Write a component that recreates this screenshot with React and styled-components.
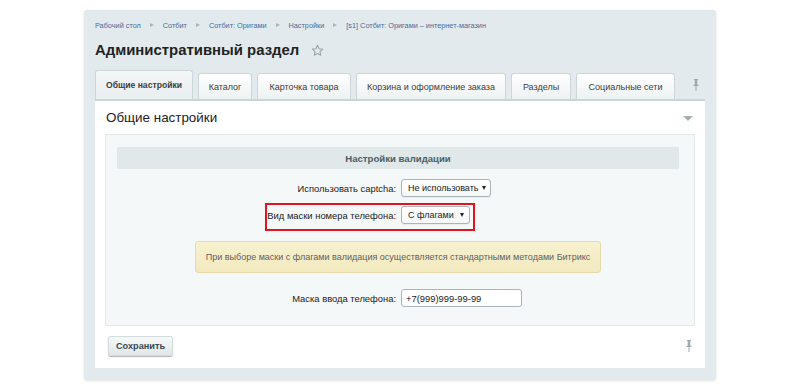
import React from "react";
import styled, { createGlobalStyle } from "styled-components";

const Global = createGlobalStyle`
  html, body { margin: 0; padding: 0; background: #fff; }
  body { font-family: "Liberation Sans", Arial, sans-serif; color: #333; }
`;

const Page = styled.div`
  padding-top: 10px;
  width: 800px;
  height: 389px;
  box-sizing: border-box;
`;

const Panel = styled.div`
  width: 632px;
  margin: 0 auto;
  box-sizing: border-box;
  background: #e2eaed;
  border-radius: 3px;
  box-shadow: 0 1px 3px rgba(0, 0, 0, 0.12);
  padding: 9px 11px 12px;
`;

const Crumbs = styled.div`
  display: flex;
  align-items: center;
  height: 12px;
  font-size: 7.3px;
  color: #4a6a9a;
  white-space: nowrap;
`;

const Sep = styled.span`
  width: 0;
  height: 0;
  margin: 0 9px;
  border-left: 4px solid #a9b4b9;
  border-top: 2.5px solid transparent;
  border-bottom: 2.5px solid transparent;
`;

const TitleRow = styled.div`
  display: flex;
  align-items: center;
  margin-top: 7px;
  height: 24px;
`;

const Title = styled.h1`
  margin: 0;
  font-size: 14.9px;
  font-weight: bold;
  color: #222;
  white-space: nowrap;
`;

const Star = styled.svg`
  margin-left: 12px;
  margin-top: 1px;
`;

const TabsRow = styled.div`
  display: flex;
  align-items: flex-end;
  gap: 5px;
  margin-top: 8px;
  height: 29px;
`;

const Tab = styled.div`
  box-sizing: border-box;
  flex: none;
  width: ${(p) => p.$w}px;
  height: ${(p) => (p.$active ? "29px" : "26px")};
  display: flex;
  align-items: center;
  justify-content: center;
  white-space: nowrap;
  font-size: ${(p) => (p.$active ? "8.6px" : "9px")};
  font-weight: ${(p) => (p.$active ? "bold" : "normal")};
  color: #3d3d3d;
  border: 1px solid #cdd6d9;
  border-bottom: none;
  border-radius: 3px 3px 0 0;
  background: ${(p) =>
    p.$active
      ? "linear-gradient(#f4f6f7, #e9eef0)"
      : "linear-gradient(#ffffff, #eef2f3)"};
`;

const TabsFill = styled.div`
  flex: 1;
  display: flex;
  justify-content: flex-end;
  align-self: center;
  padding-right: 5px;
`;

const Content = styled.div`
  background: #fff;
  border-top: 2px solid #cbd4d7;
  box-sizing: border-box;
  height: 269px;
  display: flex;
  flex-direction: column;
`;

const SectionHead = styled.div`
  height: 33px;
  display: flex;
  align-items: center;
  justify-content: space-between;
  padding: 0 12px 0 11px;
`;

const SectionTitle = styled.div`
  font-size: 13.4px;
  color: #222;
  white-space: nowrap;
`;

const Collapse = styled.span`
  width: 0;
  height: 0;
  border-top: 5px solid #a3aeb2;
  border-left: 5.5px solid transparent;
  border-right: 5.5px solid transparent;
  margin-top: 1px;
`;

const Box = styled.div`
  margin: 0 10px;
  background: #f5f8f9;
  border: 1px solid #e3e9eb;
  padding: 12px 0 18px;
`;

const BoxHead = styled.div`
  margin: 0 15px 0 11px;
  height: 22px;
  background: #e0e8ea;
  display: flex;
  align-items: center;
  justify-content: center;
  font-size: 9.6px;
  font-weight: bold;
  color: #4b5f63;
`;

const Row = styled.div`
  position: relative;
  display: grid;
  grid-template-columns: 1fr 1fr;
  align-items: center;
  margin-top: ${(p) => p.$mt || 0}px;
  height: 18px;
`;

const Label = styled.div`
  text-align: right;
  padding-right: 4px;
  font-size: 9.4px;
  color: #222;
  white-space: nowrap;
`;

const Control = styled.div`
  padding-left: 1px;
  display: flex;
`;

const Select = styled.div`
  box-sizing: border-box;
  height: 18px;
  width: ${(p) => p.$w}px;
  display: flex;
  align-items: center;
  justify-content: space-between;
  gap: 4px;
  padding: 0 5px 0 6px;
  border: 1px solid #a8b5ba;
  border-radius: 3px;
  background: linear-gradient(#ffffff, #f6f8f8);
  font-size: 9px;
  color: #222;
  white-space: nowrap;
  box-shadow: 0 1px 1px rgba(0, 0, 0, 0.05);
`;

const Arrow = styled.span`
  flex: none;
  width: 0;
  height: 0;
  border-top: 4px solid #222;
  border-left: 2.5px solid transparent;
  border-right: 2.5px solid transparent;
`;

const Highlight = styled.div`
  position: absolute;
  left: 159px;
  width: 210px;
  top: -3px;
  height: 28px;
  box-sizing: border-box;
  border: 2px solid #e0141a;
  pointer-events: none;
`;

const Notice = styled.div`
  margin: 17px auto 0;
  width: 406px;
  height: 32px;
  box-sizing: border-box;
  background: linear-gradient(#f8f1cf, #f2e9bf);
  border: 1px solid #e4dba8;
  border-radius: 3px;
  display: flex;
  align-items: center;
  justify-content: center;
  font-size: 9px;
  color: #5f5f5f;
  white-space: nowrap;
  position: relative;
  left: -2px;
`;

const Input = styled.div`
  box-sizing: border-box;
  width: 121px;
  height: 18px;
  border: 1px solid #a8b5ba;
  border-radius: 3px;
  background: #fff;
  display: flex;
  align-items: center;
  padding: 0 4px;
  font-size: 9.4px;
  color: #222;
`;

const Footer = styled.div`
  display: flex;
  align-items: center;
  justify-content: space-between;
  padding: 10px 12px 0 13px;
`;

const Button = styled.button`
  width: 65px;
  height: 20px;
  border: none;
  border-radius: 3px;
  background: linear-gradient(#f8fafa, #dfe6e8);
  box-shadow: 0 1px 1px rgba(0, 0, 0, 0.3), inset 0 0 0 1px #d4dcdf;
  font-family: "Liberation Sans", Arial, sans-serif;
  font-size: 9.2px;
  font-weight: bold;
  color: #3c4a4e;
  padding: 0;
  cursor: pointer;
`;

const Pin = () => (
  <svg width="8" height="14" viewBox="0 0 8 14">
    <path d="M2 1h4v1H5.3v4.2L7 8H1l1.7-1.8V2H2z" fill="#a0abaf" />
    <rect x="3.5" y="8" width="1" height="5" fill="#a0abaf" />
  </svg>
);

const crumbs = [
  "Рабочий стол",
  "Сотбит",
  "Сотбит: Оригами",
  "Настройки",
  "[s1] Сотбит: Оригами – интернет-магазин",
];

const tabs = [
  ["Общие настройки", 98],
  ["Каталог", 54],
  ["Карточка товара", 94],
  ["Корзина и оформление заказа", 150],
  ["Разделы", 60],
  ["Социальные сети", 99],
];

export default function App() {
  return (
    <>
      <Global />
      <Page>
        <Panel>
          <Crumbs>
            {crumbs.map((c, i) => (
              <React.Fragment key={c}>
                {i > 0 && <Sep />}
                <span>{c}</span>
              </React.Fragment>
            ))}
          </Crumbs>
          <TitleRow>
            <Title>Административный раздел</Title>
            <Star width="13" height="13" viewBox="0 0 24 24">
              <path
                d="M12 2.5l2.9 6.2 6.6.8-4.9 4.6 1.3 6.6L12 17.4l-5.9 3.3 1.3-6.6-4.9-4.6 6.6-.8z"
                fill="none"
                stroke="#9aa6aa"
                strokeWidth="2"
                strokeLinejoin="round"
              />
            </Star>
          </TitleRow>
          <TabsRow>
            {tabs.map(([t, w], i) => (
              <Tab key={t} $w={w} $active={i === 0}>
                {t}
              </Tab>
            ))}
            <TabsFill>
              <Pin />
            </TabsFill>
          </TabsRow>
          <Content>
            <SectionHead>
              <SectionTitle>Общие настройки</SectionTitle>
              <Collapse />
            </SectionHead>
            <Box>
              <BoxHead>Настройки валидации</BoxHead>
              <Row $mt={10}>
                <Label>Использовать captcha:</Label>
                <Control>
                  <Select $w={90}>
                    <span>Не использовать</span>
                    <Arrow />
                  </Select>
                </Control>
              </Row>
              <Row $mt={9}>
                <Label>Вид маски номера телефона:</Label>
                <Control>
                  <Select $w={69}>
                    <span>С флагами</span>
                    <Arrow />
                  </Select>
                </Control>
                <Highlight />
              </Row>
              <Notice>
                При выборе маски с флагами валидация осуществляется стандартными
                методами Битрикс
              </Notice>
              <Row $mt={16}>
                <Label>Маска ввода телефона:</Label>
                <Control>
                  <Input>+7(999)999-99-99</Input>
                </Control>
              </Row>
            </Box>
            <Footer>
              <Button>Сохранить</Button>
              <Pin />
            </Footer>
          </Content>
        </Panel>
      </Page>
    </>
  );
}
